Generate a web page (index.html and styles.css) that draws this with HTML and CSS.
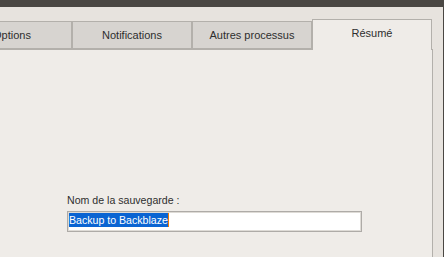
FILE: index.html
```html
<!DOCTYPE html>
<html lang="fr">
<head>
<meta charset="utf-8">
<link rel="stylesheet" href="styles.css">
</head>
<body>
<div class="topbar"></div>
<div class="window">
  <div class="main">
    <div class="tabs">
      <div class="tab">Options</div>
      <div class="tab">Notifications</div>
      <div class="tab">Autres processus</div>
      <div class="tab active">Résumé</div>
    </div>
    <div class="panel">
      <div class="field">
        <div class="label">Nom de la sauvegarde :</div>
        <div class="input"><span class="sel">Backup to Backblaze</span><span class="caret"></span></div>
      </div>
    </div>
  </div>
  <div class="edge"></div>
</div>
</body>
</html>
```
FILE: styles.css
```css
html, body {
  margin: 0;
  padding: 0;
}
body {
  width: 444px;
  height: 257px;
  overflow: hidden;
  background: #e7e3de;
  font-family: "Liberation Sans", Arial, sans-serif;
  font-size: 11px;
  color: #2e2e2e;
}
.topbar {
  height: 7px;
  background: #4a4743;
}
.window {
  display: flex;
  height: 250px;
}
.main {
  flex: 1;
  min-width: 0;
  margin-left: -48px;
  padding-top: 12px;
  padding-right: 10px;
  display: flex;
  flex-direction: column;
}
.edge {
  width: 1px;
  background: #4a4743;
}
.tabs {
  display: flex;
  align-items: flex-end;
  height: 30px;
  margin-right: 1px;
}
.tab {
  box-sizing: border-box;
  width: 120px;
  height: 28px;
  border: 1px solid #b3b0ab;
  background: #d7d4d0;
  line-height: 26px;
  text-align: center;
  white-space: nowrap;
  overflow: hidden;
}
.tab.active {
  height: 31px;
  margin-bottom: -1px;
  border-bottom: none;
  background: #efece8;
  position: relative;
  z-index: 1;
}
.panel {
  flex: 1;
  box-sizing: border-box;
  border: 1px solid #b3b0ab;
  border-bottom: none;
  background: #efece8;
  padding-left: 114px;
}
.field {
  margin-top: 144px;
  display: flex;
  flex-direction: column;
  gap: 4px;
  font-size: 10.6px;
}
.label {
  line-height: 13px;
}
.input {
  box-sizing: border-box;
  width: 295px;
  height: 21px;
  border: 1px solid #aeaba7;
  box-shadow: inset 0 0 0 1px #dedbd6;
  background: #ffffff;
  padding: 1px 1px;
  display: flex;
  align-items: flex-start;
}
.sel {
  background: #0a64d2;
  color: #ffffff;
  line-height: 14px;
  height: 14px;
}
.caret {
  width: 1px;
  height: 14px;
  background: #f07a00;
}
```
